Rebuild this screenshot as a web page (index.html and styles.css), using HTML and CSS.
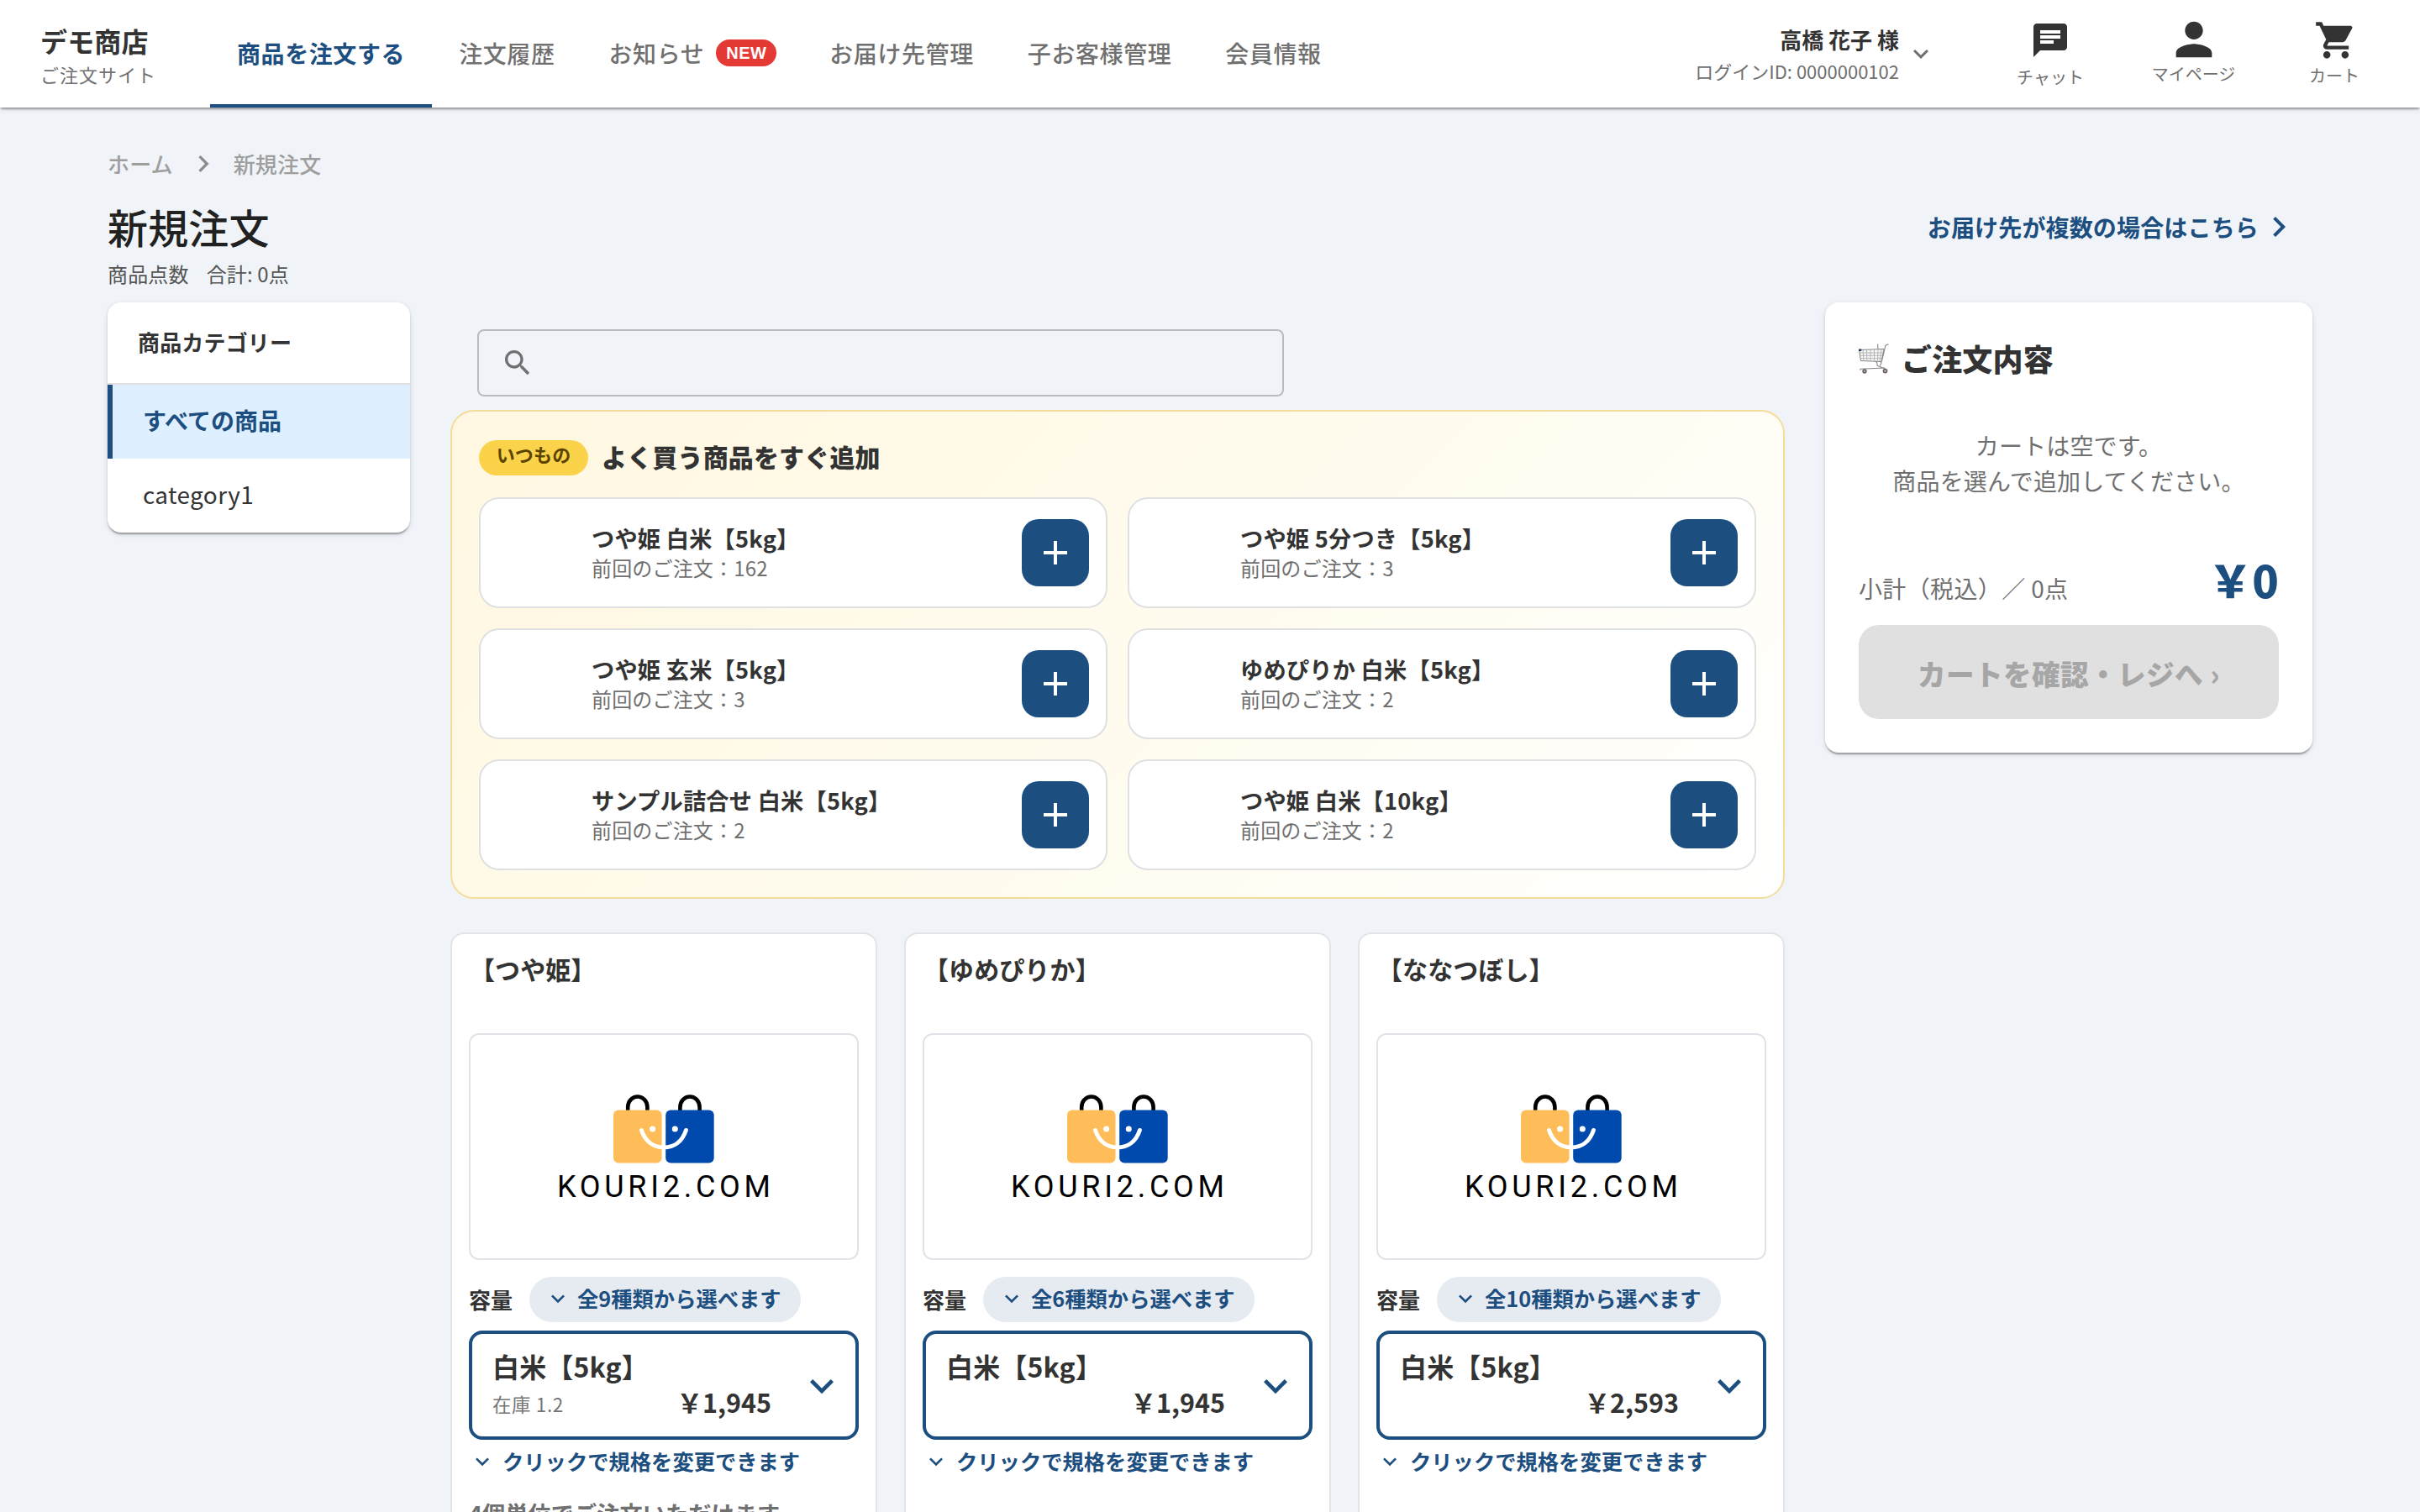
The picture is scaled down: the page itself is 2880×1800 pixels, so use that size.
FILE: index.html
```html
<!DOCTYPE html>
<html lang="ja">
<head>
<meta charset="utf-8">
<title>新規注文 | デモ商店</title>
<link rel="stylesheet" href="styles.css">
</head>
<body>
<svg class="defs" width="0" height="0" aria-hidden="true">
  <symbol id="down" viewBox="0 0 24 24"><path d="M7.41 8.59 12 13.17l4.59-4.58L18 10l-6 6-6-6z"/></symbol>
  <symbol id="right" viewBox="0 0 24 24"><path d="M10 6 8.59 7.41 13.17 12l-4.58 4.59L10 18l6-6z"/></symbol>
  <symbol id="plus" viewBox="0 0 24 24"><path d="M19 13h-6v6h-2v-6H5v-2h6V5h2v6h6z"/></symbol>
  <symbol id="logo" viewBox="0 0 260 120">
    <path d="M87.200 21V16a11.600 12.500 0 0 1 23.200 0v5M149.400 21V16a11.600 12.500 0 0 1 23.200 0v5" fill="none" stroke="#000" stroke-width="4.600"/>
    <rect x="70" y="19.500" width="57.500" height="63" rx="6" fill="#ffbd59"/>
    <rect x="132.200" y="19.500" width="57.500" height="63" rx="6" fill="#004aad"/>
    <circle cx="116.600" cy="42" r="3.500" fill="#fff"/>
    <circle cx="143.300" cy="42" r="3.500" fill="#fff"/>
    <path d="M103.500 43.500C108 57 118 64 130 64S152 57 156.400 43.500" fill="none" stroke="#fff" stroke-width="5" stroke-linecap="round"/>
    <text x="3" y="122.500" class="logo-word" textLength="254" lengthAdjust="spacing">KOURI2.COM</text>
  </symbol>
</svg>

<header class="header">
  <div class="brand">
    <div class="brand-name">デモ商店</div>
    <div class="brand-sub">ご注文サイト</div>
  </div>
  <nav class="tabs">
    <a class="tab active">商品を注文する</a>
    <a class="tab">注文履歴</a>
    <a class="tab">お知らせ<span class="new">NEW</span></a>
    <a class="tab">お届け先管理</a>
    <a class="tab">子お客様管理</a>
    <a class="tab">会員情報</a>
  </nav>
  <div class="user">
    <div class="user-text">
      <div class="user-name">高橋 花子 様</div>
      <div class="user-id">ログインID: 0000000102</div>
    </div>
    <svg class="user-arrow"><use href="#down"/></svg>
  </div>
  <div class="tools">
    <a class="tool chat"><svg viewBox="0 0 24 24"><path d="M20 2H4c-1.100 0-1.990.900-1.990 2L2 22l4-4h14c1.100 0 2-.900 2-2V4c0-1.100-.900-2-2-2zM6 9h12v2H6V9zm8 5H6v-2h8v2zm4-6H6V6h12v2z"/></svg><span>チャット</span></a>
    <a class="tool mypage"><svg viewBox="0 0 24 24"><path d="M12 12c2.210 0 4-1.790 4-4s-1.790-4-4-4-4 1.790-4 4 1.790 4 4 4zm0 2c-2.670 0-8 1.340-8 4v2h16v-2c0-2.660-5.330-4-8-4z"/></svg><span>マイページ</span></a>
    <a class="tool basket"><svg viewBox="0 0 24 24"><path d="M7 18c-1.100 0-1.990.900-1.990 2S5.900 22 7 22s2-.900 2-2-.900-2-2-2zM1 2v2h2l3.600 7.590-1.350 2.450c-.160.280-.250.610-.250.960 0 1.100.900 2 2 2h12v-2H7.420c-.140 0-.250-.110-.250-.250l.030-.120.900-1.630h7.450c.750 0 1.410-.410 1.750-1.030l3.580-6.490c.080-.140.120-.310.120-.480 0-.550-.450-1-1-1H5.210l-.940-2H1zm16 16c-1.100 0-1.990.900-1.990 2s.890 2 1.990 2 2-.900 2-2-.900-2-2-2z"/></svg><span>カート</span></a>
  </div>
</header>

<main class="page">
  <div class="crumbs"><span>ホーム</span><svg><use href="#right"/></svg><span>新規注文</span></div>
  <div class="title-row">
    <h1>新規注文</h1>
    <a class="multi">お届け先が複数の場合はこちら<svg><use href="#right"/></svg></a>
  </div>
  <div class="count"><span>商品点数</span><span>合計: 0点</span></div>

  <div class="columns">
    <aside class="categories">
      <div class="cat-head">商品カテゴリー</div>
      <a class="cat selected">すべての商品</a>
      <a class="cat">category1</a>
    </aside>

    <section class="center">
      <div class="search"><svg viewBox="0 0 24 24"><path d="M15.500 14h-.790l-.280-.270C15.410 12.590 16 11.110 16 9.500 16 5.910 13.090 3 9.500 3S3 5.910 3 9.500 5.910 16 9.500 16c1.610 0 3.090-.590 4.230-1.570l.270.280v.790l5 4.990L20.490 19l-4.990-5zm-6 0C7.010 14 5 11.990 5 9.500S7.010 5 9.500 5 14 7.010 14 9.500 11.990 14 9.500 14z"/></svg></div>

      <div class="usual">
        <div class="usual-head"><span class="usual-badge">いつもの</span><h2>よく買う商品をすぐ追加</h2></div>
        <div class="usual-grid">
          <div class="fav"><div><b>つや姫 白米【5kg】</b><p>前回のご注文：162</p></div><button><svg><use href="#plus"/></svg></button></div>
          <div class="fav"><div><b>つや姫 5分つき【5kg】</b><p>前回のご注文：3</p></div><button><svg><use href="#plus"/></svg></button></div>
          <div class="fav"><div><b>つや姫 玄米【5kg】</b><p>前回のご注文：3</p></div><button><svg><use href="#plus"/></svg></button></div>
          <div class="fav"><div><b>ゆめぴりか 白米【5kg】</b><p>前回のご注文：2</p></div><button><svg><use href="#plus"/></svg></button></div>
          <div class="fav"><div><b>サンプル詰合せ 白米【5kg】</b><p>前回のご注文：2</p></div><button><svg><use href="#plus"/></svg></button></div>
          <div class="fav"><div><b>つや姫 白米【10kg】</b><p>前回のご注文：2</p></div><button><svg><use href="#plus"/></svg></button></div>
        </div>
      </div>

      <div class="products">
        <article class="product">
          <h3>【つや姫】</h3>
          <div class="photo"><svg><use href="#logo"/></svg></div>
          <div class="size-row"><span class="size">容量</span><span class="chip"><svg><use href="#down"/></svg>全9種類から選べます</span></div>
          <div class="select"><div class="select-body"><div class="variant">白米【5kg】</div><div class="price-row"><span class="stock">在庫 1.2</span><span class="price">￥1,945</span></div></div><svg><use href="#down"/></svg></div>
          <div class="hint"><svg><use href="#down"/></svg>クリックで規格を変更できます</div>
          <div class="unit">4個単位でご注文いただけます</div>
        </article>
        <article class="product">
          <h3>【ゆめぴりか】</h3>
          <div class="photo"><svg><use href="#logo"/></svg></div>
          <div class="size-row"><span class="size">容量</span><span class="chip"><svg><use href="#down"/></svg>全6種類から選べます</span></div>
          <div class="select"><div class="select-body"><div class="variant">白米【5kg】</div><div class="price-row"><span class="stock"></span><span class="price">￥1,945</span></div></div><svg><use href="#down"/></svg></div>
          <div class="hint"><svg><use href="#down"/></svg>クリックで規格を変更できます</div>
        </article>
        <article class="product">
          <h3>【ななつぼし】</h3>
          <div class="photo"><svg><use href="#logo"/></svg></div>
          <div class="size-row"><span class="size">容量</span><span class="chip"><svg><use href="#down"/></svg>全10種類から選べます</span></div>
          <div class="select"><div class="select-body"><div class="variant">白米【5kg】</div><div class="price-row"><span class="stock"></span><span class="price">￥2,593</span></div></div><svg><use href="#down"/></svg></div>
          <div class="hint"><svg><use href="#down"/></svg>クリックで規格を変更できます</div>
        </article>
      </div>
    </section>

    <aside class="cart">
      <h2><svg class="trolley" viewBox="0 0 36 36">
        <path d="M.5 7.500 30 6.500 27 21.500 2.500 20.500z" fill="#f6f6f6" stroke="#858585" stroke-width="1"/>
        <path d="M1 11h28M1.500 14.300h27M2 17.600h25.500M5 7.500l1 13M9.500 7.500l.5 13M14 7.200v13.500M18.500 7v14M23 7l-.5 14M27 6.800 25 21" stroke="#a8a8a8" stroke-width=".8"/>
        <path d="M35.500.800 32 2.200 27.300 21.500M20 21c4 2.500 1 4.500 2.500 5.500l9 3.500M26 21.500c3 2.500-2 3.500 0 5M31 29 2 30.200v1.500M22.500.5l.5 6" stroke="#8b8583" stroke-width="1.100"/>
        <path d="M0 6.500h3.200v2.500H0z" fill="#1c3c60"/>
        <circle cx="7" cy="33" r="2.700" fill="#6b615e"/><circle cx="7" cy="33" r="1.100" fill="#c9c2be"/>
        <circle cx="31.500" cy="32.600" r="2.900" fill="#6b615e"/><circle cx="31.500" cy="32.600" r="1.200" fill="#c9c2be"/>
      </svg>ご注文内容</h2>
      <p class="empty">カートは空です。<br>商品を選んで追加してください。</p>
      <div class="subtotal"><span class="label">小計（税込）／ 0点</span><span class="amount">￥0</span></div>
      <button class="checkout">カートを確認・レジへ ›</button>
    </aside>
  </div>
</main>
</body>
</html>
```
FILE: styles.css
```css
* { box-sizing: border-box; margin: 0; padding: 0; }

body {
  width: 2880px;
  height: 1800px;
  overflow: hidden;
  background: #f0f4f8;
  color: #333;
  font-family: "Noto Sans CJK JP", "Noto Sans", sans-serif;
  line-height: 1;
}

svg { display: block; fill: currentColor; flex: none; }
.defs { position: absolute; }
button { border: 0; font: inherit; letter-spacing: inherit; }

/* header */
.header {
  position: relative;
  display: flex;
  height: 128px;
  padding-left: 48px;
  background: #fff;
  box-shadow: 0 4px 2px -2px rgba(0,0,0,.2), 0 2px 2px rgba(0,0,0,.14), 0 2px 6px rgba(0,0,0,.12);
}
.brand { width: 202px; padding-top: 25px; }
.brand-name { font-size: 32px; line-height: 46px; font-weight: 700; letter-spacing: .005em; }
.brand-sub { font-size: 22px; line-height: 34px; letter-spacing: .045em; color: #707070; }
.tabs { display: flex; }
.tab {
  display: flex;
  align-items: center;
  padding: 2px 32px 0;
  border-bottom: 4px solid transparent;
  font-size: 28px;
  letter-spacing: .021em;
  font-weight: 500;
  color: #707070;
}
.tab.active { color: #1c4e80; border-color: #1c4e80; font-weight: 700; }
.new {
  width: 72px;
  margin-left: 14px;
  margin-right: -1px;
  border-radius: 16px;
  background: #e53935;
  color: #fff;
  font: 700 20px/32px "Liberation Sans", sans-serif;
  letter-spacing: .02em;
  text-align: center;
}
.user { display: flex; margin-left: auto; padding-top: 31px; }
.user-text { text-align: right; }
.user-name { font-size: 26px; line-height: 32px; font-weight: 700; }
.user-id { margin-top: 6px; font-size: 22px; line-height: 30px; color: #707070; }
.user-arrow { width: 36px; height: 36px; margin: 15px 0 0 8px; color: #707070; }
.tools { display: flex; margin-left: 54px; width: 522px; }
.tool { display: flex; flex-direction: column; align-items: center; font-size: 20px; line-height: 24px; color: #333; }
.tool span { color: #707070; }
.chat { width: 164px; padding-top: 24px; }
.chat svg { width: 48px; height: 48px; margin-bottom: 8px; }
.mypage { width: 177px; padding-top: 15px; }
.mypage svg { width: 64px; height: 64px; margin-bottom: -3px; }
.basket { width: 158px; padding-top: 22px; }
.basket svg { width: 52px; height: 52px; margin-bottom: 4px; margin-left: 3px; }

/* page heading */
.page { padding: 0 128px; letter-spacing: .01em; }
.crumbs { display: flex; align-items: center; height: 136px; font-size: 26px; font-weight: 500; color: #9e9e9e; padding-bottom: 2px; }
.crumbs svg { width: 40px; height: 40px; margin: 0 16px; color: #8c8c8c; }
.title-row { display: flex; align-items: center; justify-content: space-between; height: 48px; margin-top: -19px; }
h1 { font-size: 48px; font-weight: 500; color: #212121; }
.multi { display: flex; align-items: center; margin-right: 16px; padding-top: 2px; font-size: 28px; font-weight: 700; color: #1c4e80; }
.multi svg { width: 48px; height: 48px; }
.count { display: flex; gap: 21px; height: 67px; padding-top: 19px; font-size: 24px; line-height: 28px; color: #555; }

.columns { display: grid; grid-template-columns: 360px 1588px 580px; gap: 48px; align-items: start; }
.categories, .cart {
  border-radius: 16px;
  background: #fff;
  box-shadow: 0 4px 2px -2px rgba(0,0,0,.2), 0 2px 2px rgba(0,0,0,.14), 0 2px 6px rgba(0,0,0,.12);
}

/* categories */
.categories { overflow: hidden; }
.cat-head { height: 98px; padding-left: 36px; border-bottom: 2px solid #e0e0e0; font-size: 26px; line-height: 93px; font-weight: 700; }
.cat { display: block; height: 88px; padding-left: 36px; border-left: 6px solid transparent; font-size: 28px; line-height: 85px; letter-spacing: .013em; }
.cat.selected { border-color: #1c4e80; background: #def0ff; color: #1c4e80; font-weight: 700; letter-spacing: 0; }

/* search */
.search { display: flex; align-items: center; width: 960px; height: 80px; margin: 32px 0 16px 32px; padding-left: 26px; border: 2px solid #b9bcbf; border-radius: 8px; color: #707070; }
.search svg { width: 40px; height: 40px; }

/* frequently bought */
.usual { height: 582px; padding: 32px; border: 2px solid #f4dd9b; border-radius: 28px; background: linear-gradient(135deg, #fff7e1, #fffcf0 60%, #fff); }
.usual-head { display: flex; align-items: center; height: 42px; margin: 2px 0 26px; gap: 16px; }
.usual-badge { width: 130px; height: 42px; border-radius: 21px; background: #fbd34a; color: #5b4300; font-size: 22px; line-height: 32px; font-weight: 600; text-align: center; }
.usual h2 { padding-bottom: 5px; font-size: 30px; font-weight: 800; }
.usual-grid { display: grid; grid-template-columns: 1fr 1fr; gap: 24px; }
.fav { display: flex; align-items: center; justify-content: space-between; height: 132px; padding: 0 20px 0 132px; border: 2px solid #dfe0e2; border-radius: 24px; background: #fff; }
.fav b { display: block; font-size: 27.200px; line-height: 35px; padding-bottom: 1px; font-weight: 700; letter-spacing: .009em; }
.fav p { font-size: 24px; line-height: 34px; color: #707070; letter-spacing: .007em; }
.fav button { width: 80px; height: 80px; padding: 16px; border-radius: 20px; background: #1c4e80; color: #fff; }
.fav button svg { width: 48px; height: 48px; }

/* products */
.products { display: grid; grid-template-columns: repeat(3, 1fr); gap: 32px; margin-top: 40px; }
.product { height: 760px; padding: 0 20px; border: 2px solid #e1e3e8; border-radius: 16px; background: #fff; }
.product h3 { height: 118px; padding: 21px 0 0 1px; font-size: 30px; line-height: 40px; font-weight: 700; letter-spacing: .003em; }
.photo { height: 270px; padding: 70px 0 0 100px; border: 2px solid #e2e3e8; border-radius: 12px; }
.photo svg { width: 260px; height: 120px; overflow: visible; }
.logo-word { font: 400 36px Roboto, sans-serif; fill: #000; letter-spacing: 0; }
#logo { overflow: visible; }
.size-row { display: flex; align-items: center; gap: 20px; height: 54px; margin: 20px 0 10px; letter-spacing: 0; }
.size { font-size: 26px; font-weight: 700; }
.chip { display: flex; align-items: center; height: 54px; padding: 0 23px 2px 18px; border-radius: 27px; background: #e6ebf2; color: #1c4e80; font-size: 25.300px; font-weight: 700; }
.chip svg { width: 32px; height: 32px; margin-right: 7px; }
.hint svg { width: 32px; height: 32px; margin-right: 8px; }
.select { display: flex; align-items: center; height: 130px; padding: 0 12px 0 24px; border: 4px solid #1c4e80; border-radius: 16px; }
.select > svg { width: 56px; height: 56px; margin-top: 2px; color: #1c4e80; }
.select-body { width: 332px; margin-right: 32px; padding-bottom: 4px; }
.variant { font-size: 32px; line-height: 44px; font-weight: 700; letter-spacing: .004em; }
.price-row { display: flex; align-items: center; justify-content: space-between; height: 42px; }
.stock { padding-top: 5px; font-size: 22.400px; letter-spacing: .03em; color: #757575; }
.price { padding-top: 1px; font-size: 30.500px; font-weight: 600; letter-spacing: 0; }
.hint { display: flex; align-items: center; height: 52px; color: #1c4e80; font-size: 25.300px; font-weight: 700; letter-spacing: 0; }
.unit { margin-top: 20px; font-size: 27.200px; line-height: 30px; font-weight: 700; color: #707070; letter-spacing: .002em; }

/* cart */
.cart { height: 536px; padding: 40px; }
.cart h2 { display: flex; align-items: center; gap: 15px; height: 52px; font-size: 36px; font-weight: 800; }
.trolley { width: 36px; height: 36px; margin-top: 2px; fill: none; }
.empty { margin-top: 57px; font-size: 28px; line-height: 42px; text-align: center; color: #707070; }
.subtotal { display: flex; align-items: baseline; justify-content: space-between; height: 58px; margin-top: 71px; margin-bottom: 22px; }
.subtotal .label { font-size: 28px; letter-spacing: .013em; color: #707070; }
.subtotal .amount { font-size: 52px; font-weight: 800; color: #1c4e80; letter-spacing: 0; }
.checkout { width: 500px; height: 112px; padding-top: 3px; border-radius: 24px; background: #e0e0e0; color: #a6a6a6; font-size: 33.600px; font-weight: 800; letter-spacing: .013em; }
```
